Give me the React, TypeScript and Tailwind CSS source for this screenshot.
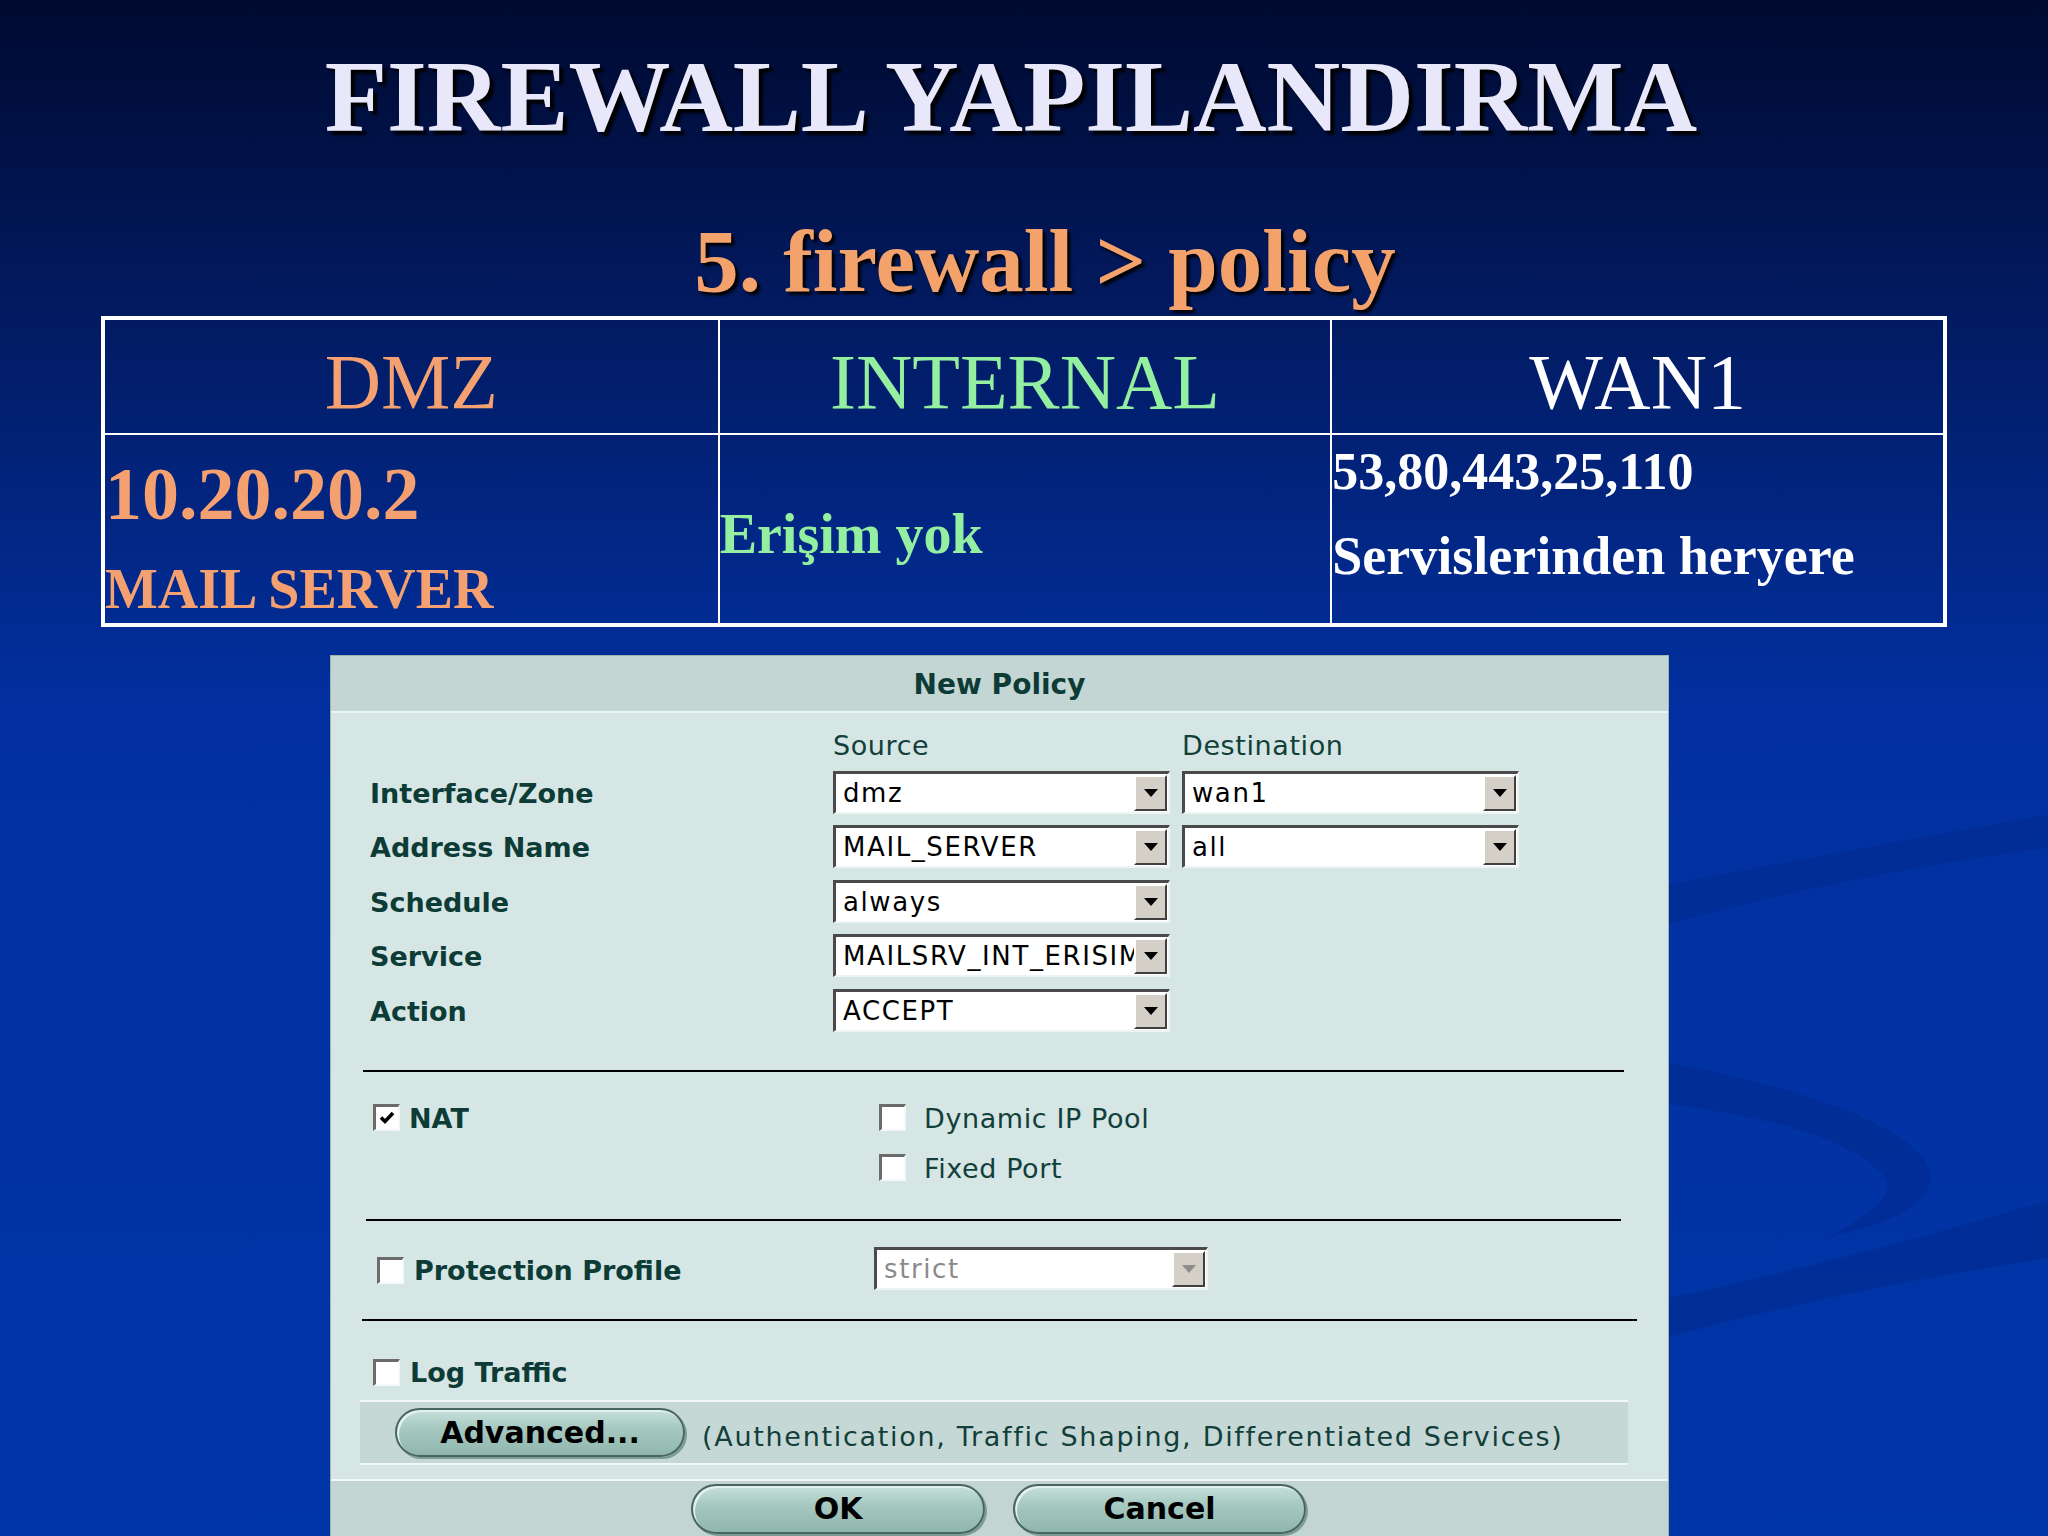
import React from 'react';

const serif = "font-['Liberation_Serif','Times_New_Roman',serif]";

const CheckBox = ({ checked = false }: { checked?: boolean }) => (
  <span className="flex h-[27px] w-[27px] shrink-0 items-center justify-center border-t-[3px] border-l-[3px] border-b-2 border-r-2 border-t-[#6b6b6b] border-l-[#6b6b6b] border-b-[#f4f8f8] border-r-[#f4f8f8] bg-white">
    {checked && (
      <svg width="16" height="14" viewBox="0 0 16 14">
        <path d="M2 6.5l4 4 8-8.5" stroke="#000" strokeWidth="3.6" fill="none" />
      </svg>
    )}
  </span>
);

const Select = ({ value, disabled = false, width = 'w-[337px]' }: { value: string; disabled?: boolean; width?: string }) => (
  <div
    className={`flex h-[43px] ${width} border-t-[3px] border-l-[3px] border-b-2 border-r-2 border-t-[#4a4a4a] border-l-[#4a4a4a] border-b-[#eef4f3] border-r-[#eef4f3] bg-white`}
  >
    <span
      className={`flex-1 overflow-hidden whitespace-nowrap pl-[7px] text-[26px] leading-[38px] tracking-[1.6px] ${disabled ? 'text-[#8a8a8a]' : 'text-black'}`}
    >
      {value}
    </span>
    <span className="my-[1px] mr-[1px] flex w-[33px] shrink-0 items-center justify-center border-t-2 border-l-2 border-b-2 border-r-2 border-t-white border-l-white border-b-[#404040] border-r-[#404040] bg-[#d4d0c8]">
      <svg width="14" height="8" viewBox="0 0 14 8">
        <path d="M0 0h14L7 8z" fill={disabled ? '#8e8e8e' : '#000'} />
      </svg>
    </span>
  </div>
);

const PillButton = ({ label, width }: { label: string; width: string }) => (
  <button
    type="button"
    className={`flex h-[49px] ${width} items-center justify-center rounded-full border-2 border-[#48665f] bg-[linear-gradient(180deg,#c6e1da_0%,#a6c9c1_40%,#8fb6ad_100%)] text-[30px] font-bold text-black shadow-[inset_2px_2px_0_#e2f1ed,2px_2px_0_#7c9d97]`}
  >
    {label}
  </button>
);

const rows: { label: string; src: string; dst?: string }[] = [
  { label: 'Interface/Zone', src: 'dmz', dst: 'wan1' },
  { label: 'Address Name', src: 'MAIL_SERVER', dst: 'all' },
  { label: 'Schedule', src: 'always' },
  { label: 'Service', src: 'MAILSRV_INT_ERISIM' },
  { label: 'Action', src: 'ACCEPT' },
];

const App = () => {
  return (
    <div className="relative h-[1536px] w-[2048px] overflow-hidden bg-[linear-gradient(180deg,#000a30_0%,#021a60_20%,#0230a0_46%,#0035a8_100%)]">
      {/* background swooshes */}
      <svg className="pointer-events-none absolute inset-0" width="2048" height="1536" viewBox="0 0 2048 1536">
        <g fill="#00298a" opacity="0.5">
          <path d="M1560 905 C1720 875 1890 842 2048 815 L2048 848 C1890 868 1720 905 1560 955 Z" />
          <path d="M1560 1048 C1720 1065 1880 1105 1925 1160 C1950 1200 1885 1226 1830 1236 C1872 1214 1902 1192 1880 1172 C1838 1128 1710 1102 1560 1096 Z" />
          <path d="M1560 1320 C1730 1288 1890 1248 2048 1200 L2048 1258 C1890 1282 1730 1316 1560 1368 Z" />
        </g>
      </svg>

      <div className="relative">
        <h1
          className={`${serif} pr-[26px] pt-[46px] text-center text-[102px] font-bold leading-none text-[#e8e8fa] [text-shadow:4px_4px_3px_#000]`}
        >
          FIREWALL YAPILANDIRMA
        </h1>
        <h2
          className={`${serif} mt-[69px] pl-[42px] text-center text-[89px] font-bold leading-none text-[#f4a26c] [text-shadow:3px_3px_3px_#000]`}
        >
          5. firewall &gt; policy
        </h2>

        {/* zone table */}
        <div className={`${serif} ml-[101px] mt-[10px] w-[1846px] border-4 border-white`}>
          <div className="grid h-[113px] grid-cols-3 text-center text-[78px] leading-none">
            <div className="pt-[23px] text-[#f4a070]">DMZ</div>
            <div className="border-l-2 border-white pt-[23px] text-[#94f0a0]">INTERNAL</div>
            <div className="border-l-2 border-white pt-[23px] text-white">WAN1</div>
          </div>
          <div className="grid h-[190px] grid-cols-3 border-t-2 border-white font-bold leading-none">
            <div className="pt-[22px] text-[#f4a070]">
              <div className="text-[74px]">10.20.20.2</div>
              <div className="mt-[30px] text-[56px]">MAIL SERVER</div>
            </div>
            <div className="border-l-2 border-white pt-[71px] text-[56px] text-[#94f0a0]">Erişim yok</div>
            <div className="border-l-2 border-white pt-[11px] text-white">
              <div className="text-[52px]">53,80,443,25,110</div>
              <div className="mt-[31px] text-[54px]">Servislerinden heryere</div>
            </div>
          </div>
        </div>

        {/* New Policy dialog */}
        <div className="ml-[330px] mt-[28px] w-[1339px] border border-[#9fb3b1] bg-[#d5e6e5] font-['DejaVu_Sans','Verdana',sans-serif] text-[#123f3a]">
          <div className="flex h-[57px] items-center justify-center border-b-2 border-[#edf5f4] bg-[#c3d6d4] pt-[3px] text-[28px] font-bold text-[#0d3b36]">
            New Policy
          </div>

          <div className="grid grid-cols-[451px_337px_337px] gap-x-[12px] gap-y-[11.5px] pl-[39px] pt-[16px]">
            <div />
            <div className="h-[30px] pt-[4px] text-[27px] leading-[26px] tracking-[0.6px]">Source</div>
            <div className="h-[30px] pt-[4px] text-[27px] leading-[26px] tracking-[0.6px]">Destination</div>
            {rows.map((r) => (
              <React.Fragment key={r.label}>
                <div className="h-[43px] pt-[3px] text-[27px] font-bold leading-[40px] text-[#0d3b36]">{r.label}</div>
                <Select value={r.src} />
                {r.dst ? <Select value={r.dst} /> : <div />}
              </React.Fragment>
            ))}
          </div>

          <div className="ml-[32px] mt-[38px] h-[2px] w-[1261px] bg-black" />

          <div className="mt-[31px] flex pl-[42px]">
            <div className="flex h-[30px] w-[506px] items-center gap-[9px]">
              <CheckBox checked />
              <span className="pt-[3px] text-[27px] font-bold text-[#0d3b36]">NAT</span>
            </div>
            <div className="flex flex-col gap-[20px]">
              <div className="flex h-[30px] items-center gap-[18px]">
                <CheckBox />
                <span className="pt-[3px] text-[27px] tracking-[0.6px]">Dynamic IP Pool</span>
              </div>
              <div className="flex h-[30px] items-center gap-[18px]">
                <CheckBox />
                <span className="pt-[3px] text-[27px] tracking-[0.6px]">Fixed Port</span>
              </div>
            </div>
          </div>

          <div className="ml-[35px] mt-[36px] h-[2px] w-[1255px] bg-black" />

          <div className="mt-[26px] flex h-[43px] items-center pl-[46px]">
            <div className="flex w-[497px] items-center gap-[10px] pt-[4px]">
              <CheckBox />
              <span className="pt-[2px] text-[27px] font-bold text-[#0d3b36]">Protection Profile</span>
            </div>
            <Select value="strict" disabled width="w-[334px]" />
          </div>

          <div className="ml-[31px] mt-[29px] h-[2px] w-[1275px] bg-black" />

          <div className="mt-[37px] flex h-[30px] items-center gap-[10px] pl-[42px]">
            <CheckBox />
            <span className="pt-[2px] text-[27px] font-bold text-[#0d3b36]">Log Traffic</span>
          </div>

          <div className="ml-[29px] mt-[12px] flex h-[65px] w-[1268px] items-center border-y-2 border-[#f2f8f7] bg-[#c6d8d6] pl-[35px]">
            <PillButton label="Advanced..." width="w-[290px]" />
            <span className="ml-[17px] pt-[10px] text-[27px] tracking-[1.7px]">
              (Authentication, Traffic Shaping, Differentiated Services)
            </span>
          </div>

          <div className="mt-[14px] flex h-[60px] gap-[28px] border-t-2 border-[#f2f8f7] bg-[#c3d5d3] pl-[360px] pt-[3px]">
            <PillButton label="OK" width="w-[294px] h-[50px]" />
            <PillButton label="Cancel" width="w-[293px] h-[50px]" />
          </div>
        </div>
      </div>
    </div>
  );
};

export default App;
